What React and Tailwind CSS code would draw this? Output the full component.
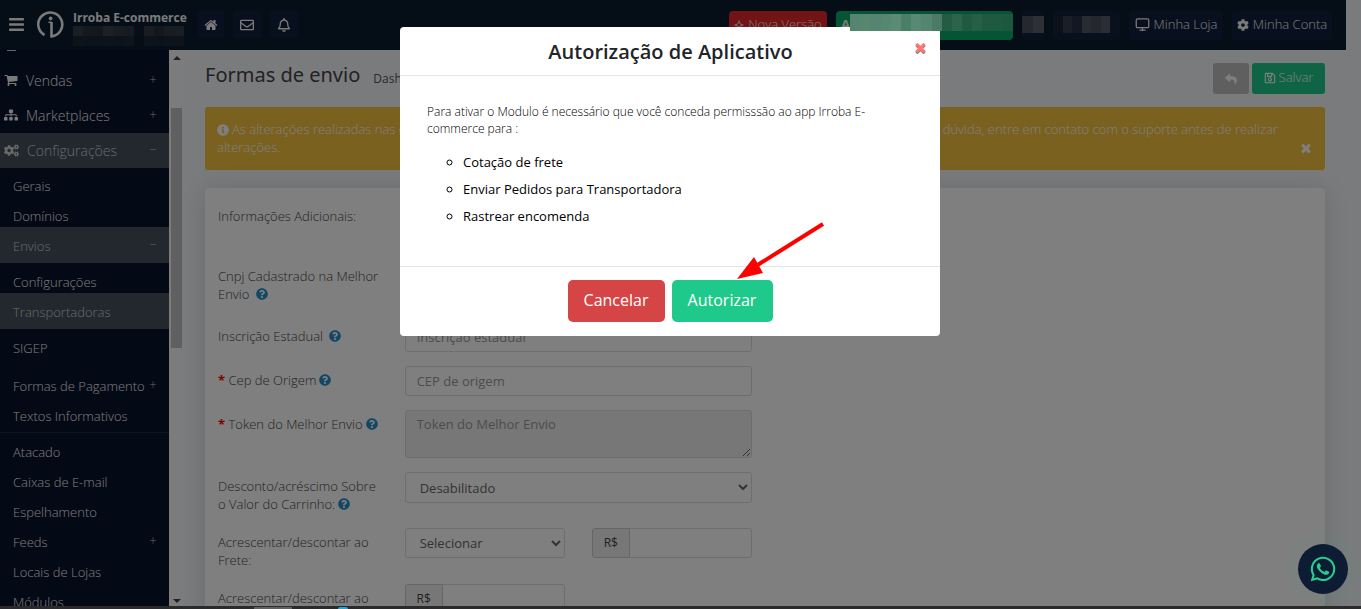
import {
  FaBars,
  FaCog,
  FaCogs,
  FaInfoCircle,
  FaQuestionCircle,
  FaRegBell,
  FaRegEnvelope,
  FaRegSave,
  FaReply,
  FaSitemap,
  FaWhatsapp,
} from "react-icons/fa";
import { Monitor } from "lucide-react";

const HOME =
  "M1472 992v480q0 26-19 45t-45 19h-384v-384h-256v384h-384q-26 0-45-19t-19-45v-480q0-1 .5-3t.5-3l575-474 575 474q1 2 1 6zm223-69l-62 74q-8 9-21 11h-3q-13 0-21-7l-692-577-692 577q-12 8-24 7-13-2-21-11l-62-74q-8-10-7-23.5t11-21.5l719-599q32-26 76-26t76 26l244 204v-195q0-14 9-23t23-9h192q14 0 23 9t9 23v408l219 182q10 8 11 21.5t-7 23.5z";
const CART =
  "M704 1536q0 52-38 90t-90 38-90-38-38-90 38-90 90-38 90 38 38 90zm896 0q0 52-38 90t-90 38-90-38-38-90 38-90 90-38 90 38 38 90zm128-1088v512q0 24-16.5 42.5t-40.5 21.5l-1044 122q13 60 13 70 0 16-24 64h920q26 0 45 19t19 45-19 45-45 19h-1024q-26 0-45-19t-19-45q0-11 8-31.5t16-36 21.5-40 15.5-29.5l-177-823h-204q-26 0-45-19t-19-45 19-45 45-19h256q16 0 28.5 6.5t19.5 15.5 13 24.5 8 26 5.5 29.5 4.5 26h1201q26 0 45 19t19 45z";
const TIMES =
  "M1490 1322q0 40-28 68l-136 136q-28 28-68 28t-68-28l-294-294-294 294q-28 28-68 28t-68-28l-136-136q-28-28-28-68t28-68l294-294-294-294q-28-28-28-68t28-68l136-136q28-28 68-28t68 28l294 294 294-294q28-28 68-28t68 28l136 136q28 28 28 68t-28 68l-294 294 294 294q28 28 28 68z";

function Glyph({ d, className }) {
  return (
    <svg viewBox="0 0 1792 1792" fill="currentColor" className={className} aria-hidden="true">
      <path d={d} />
    </svg>
  );
}

function Logo() {
  return (
    <svg viewBox="0 0 27 27" className="size-[27px] shrink-0" fill="none" stroke="currentColor" aria-hidden="true">
      <path d="M7.5 24A12 12 0 1 1 14.5 25.4V11" strokeWidth="2.6" />
      <circle cx="13.6" cy="7.4" r="1.9" fill="currentColor" stroke="none" />
      <path d="M11.5 11.3h3" strokeWidth="1.6" />
    </svg>
  );
}

function Sparkle() {
  return (
    <svg viewBox="0 0 12 12" className="size-[10px]" fill="none" stroke="currentColor" aria-hidden="true">
      <path d="M6 .8 7.3 4.7 11.2 6 7.3 7.3 6 11.2 4.7 7.3.8 6l3.9-1.3z" />
    </svg>
  );
}

function Mosaic({ colors, className }) {
  return (
    <div className={`flex ${className}`}>
      {colors.map((c, i) => (
        <span key={i} className="flex-1" style={{ background: c }} />
      ))}
    </div>
  );
}

function Header() {
  const square = "h-[27px] flex items-center justify-center rounded-xs bg-[#11213f]";
  const wide = "h-[29px] flex items-center justify-center gap-1 rounded-sm bg-[#11213f] pb-0.5 text-[13px] font-light whitespace-nowrap";
  return (
    <header className="mr-[15px] flex h-[50px] shrink-0 items-start bg-[#0b1a2f] pt-[11px] pr-[14px] pl-2 text-[#f4f4f4]">
      <button type="button" aria-label="Menu" className="mr-3 flex h-[27px] w-[17px] items-center">
        <FaBars size={17} />
      </button>
      <Logo />
      <div className="ml-[9px] w-[111px]">
        <div className="-mt-0.5 text-[12px] leading-[17px] font-bold whitespace-nowrap">Irroba E-commerce</div>
        <Mosaic
          className="h-[10px]"
          colors={["#343d4b", "#28323f", "#26303f", "#39424f", "#303a48", "#2c3645", "#0f1d30", "#303a48", "#27313f", "#303a48", "#323b49"]}
        />
        <Mosaic
          className="h-[10px]"
          colors={["#1b2637", "#172434", "#192535", "#1b2737", "#182435", "#1c2838", "#0c1b2f", "#1b2737", "#182435", "#1b2737", "#192636"]}
        />
      </div>
      <nav className="ml-[14px] flex gap-[9px]">
        <button type="button" aria-label="Início" className={`${square} w-[26px]`}>
          <Glyph d={HOME} className="size-[14px]" />
        </button>
        <button type="button" aria-label="Mensagens" className={`${square} w-[28px]`}>
          <FaRegEnvelope size={14} />
        </button>
        <button type="button" aria-label="Notificações" className={`${square} w-[28px]`}>
          <FaRegBell size={14} />
        </button>
      </nav>
      <nav className="ml-auto flex gap-[9px]">
        <button
          type="button"
          className="flex h-[29px] w-[98px] items-center justify-center gap-1 rounded-sm bg-[#e4282c] pb-0.5 text-[13px] font-light whitespace-nowrap"
        >
          <Sparkle />
          Nova Versão
        </button>
        <button type="button" className="h-[29px] w-[177px] rounded-sm bg-[#0aa866] pb-0.5 pl-[5px] text-left text-[13px] font-bold">
          A
        </button>
        <button type="button" aria-label="Idioma" className={`${wide} w-[22px]`}>
          <Mosaic className="h-[17px] w-full" colors={["#4a505f", "#5b606e"]} />
        </button>
        <button type="button" aria-label="Usuário" className={`${wide} w-[67px]`}>
          <Mosaic
            className="h-[17px] w-full"
            colors={["#192439", "#343c4c", "#262f42", "#505664", "#484e5c", "#545a67", "#142039"]}
          />
        </button>
        <button type="button" className={`${wide} w-[94px]`}>
          <Monitor size={15} strokeWidth={2} />
          Minha Loja
        </button>
        <button type="button" className={`${wide} w-[100px]`}>
          <FaCog size={12} />
          Minha Conta
        </button>
      </nav>
    </header>
  );
}

function MenuRow({ icon, label, sign, active }) {
  return (
    <a
      href="#"
      className={`flex h-[35px] items-center gap-2 pr-3 pb-px pl-1 text-[14px] font-light ${active ? "bg-[#47515d] text-[#d0d0d0]" : ""}`}
    >
      {icon}
      <span className="flex-1">{label}</span>
      <span className="w-2 text-center text-[13px] text-[#c0c0c0]">{sign}</span>
    </a>
  );
}

function SubRow({ label, sign, active }) {
  return (
    <a
      href="#"
      className={`flex justify-between pt-[10px] pr-3 pl-[13px] text-[13px] leading-[18px] font-light whitespace-nowrap ${
        active ? "bg-[#47515d] pb-2 text-[#d0d0d0]" : "pb-0.5"
      }`}
    >
      {label}
      {sign && <span className="w-2 text-center leading-[15px] text-[#c0c0c0]">{sign}</span>}
    </a>
  );
}

function Sidebar() {
  return (
    <aside className="flex shrink-0 overflow-hidden">
      <nav className="w-[169px] overflow-hidden bg-[#06122a] text-[#f4f4f4]">
        <div className="flex h-[13px] items-start pl-[7px]">
          <span className="h-px w-[9px] bg-[#c8c8c8]" />
        </div>
        <MenuRow icon={<Glyph d={CART} className="size-[14px]" />} label="Vendas" sign="+" />
        <MenuRow icon={<FaSitemap size={14} />} label="Marketplaces" sign="+" />
        <MenuRow icon={<FaCogs size={15} />} label="Configurações" sign="−" active />
        <div className="-mt-px">
          <SubRow label="Gerais" />
          <SubRow label="Domínios" />
          <SubRow label="Envios" sign="−" active />
          <SubRow label="Configurações" />
          <SubRow label="Transportadoras" active />
          <SubRow label="SIGEP" />
        </div>
        <div className="mt-2 pb-[5px]">
          <SubRow label="Formas de Pagamento" sign="+" />
          <SubRow label="Textos Informativos" />
        </div>
        <div className="border-t border-[#1f2b40]">
          <SubRow label="Atacado" />
          <SubRow label="Caixas de E-mail" />
          <SubRow label="Espelhamento" />
          <SubRow label="Feeds" sign="+" />
          <SubRow label="Locais de Lojas" />
          <SubRow label="Módulos" />
        </div>
      </nav>
      <div className="flex w-[15px] flex-col items-center bg-[#f8f8f8] py-1.5">
        <span className="border-x-4 border-b-4 border-x-transparent border-b-[#444]" />
        <span className="mt-12 h-60 w-[11px] bg-[#c1c1c1]" />
        <span className="mt-auto border-x-4 border-t-4 border-x-transparent border-t-[#444]" />
      </div>
    </aside>
  );
}

function Help() {
  return <FaQuestionCircle size={12} className="ml-[3px] inline align-[-1px] text-[#2490cc]" />;
}

function Field({ id, label, required, help, tall, children }) {
  return (
    <div className={`mb-[14px] flex ${tall || ""}`}>
      <label htmlFor={id} className="w-1/6 px-[13px] pt-[5px] text-[13px] leading-[18px] font-light">
        {required && <span className="font-bold text-[#f00]">* </span>}
        {label}
        {help && <Help />}
      </label>
      <div className="w-1/3 px-[13px]">{children}</div>
    </div>
  );
}

const control = "block w-full rounded-[3px] border border-[#dcdcdc] text-[13px] text-[#666] placeholder:text-[#999]";

function Money({ id }) {
  return (
    <div className="flex h-[30px]">
      <span className="flex w-[38px] items-center justify-center rounded-l-[3px] border border-[#ccc] bg-[#eee] text-[12px]">R$</span>
      <input id={id} aria-label="Valor em R$" className={`${control} min-w-0 flex-1 rounded-l-none border-l-0 px-3`} />
    </div>
  );
}

function Form() {
  return (
    <form className="flex-1 rounded-t-sm bg-white pt-[14px] text-[#444] shadow-[0_0_24px_rgba(0,0,0,0.12)]">
      <Field id="info" label="Informações Adicionais:" tall="min-h-[46px]" />
      <Field id="cnpj" label="Cnpj Cadastrado na Melhor Envio " help tall="min-h-[46px]">
        <input id="cnpj" className={`${control} h-[30px] bg-white px-[11px]`} />
      </Field>
      <Field id="ie" label="Inscrição Estadual " help>
        <input id="ie" placeholder="Inscrição estadual" className={`${control} h-[30px] bg-white px-[11px]`} />
      </Field>
      <Field id="cep" label="Cep de Origem" required help>
        <input id="cep" placeholder="CEP de origem" className={`${control} h-[30px] bg-white px-[11px]`} />
      </Field>
      <Field id="token" label="Token do Melhor Envio" required help>
        <textarea id="token" placeholder="Token do Melhor Envio" className={`${control} h-12 bg-[#eee] px-[11px] py-1`} />
      </Field>
      <Field id="desconto" label="Desconto/acréscimo Sobre o Valor do Carrinho:" help tall="min-h-[42px]">
        <select id="desconto" className={`${control} h-[31px] bg-white px-[10px]`}>
          <option>Desabilitado</option>
        </select>
      </Field>
      <Field id="frete" label="Acrescentar/descontar ao Frete:" tall="min-h-[42px]">
        <div className="grid grid-cols-2 gap-[27px]">
          <select id="frete" className={`${control} h-[30px] bg-white px-[10px]`}>
            <option>Selecionar</option>
          </select>
          <Money id="frete-valor" />
        </div>
      </Field>
      <Field id="frete2" label="Acrescentar/descontar ao">
        <div className="grid grid-cols-2 gap-[27px]">
          <Money id="frete2" />
        </div>
      </Field>
    </form>
  );
}

function Main() {
  return (
    <main className="flex min-w-0 flex-1 flex-col overflow-hidden bg-[#f4f6fa] pt-[13px] pr-9 pl-[21px]">
      <div className="flex h-[31px] shrink-0 items-center">
        <h1 className="mb-2 font-['Noto_Sans',sans-serif] text-[20px] leading-6 text-[#444]">Formas de envio</h1>
        <a href="#" className="ml-[13px] text-[12px] text-[#555]">
          Dashboard
        </a>
        <div className="ml-auto flex gap-[3px] text-white">
          <button type="button" aria-label="Voltar" className="flex h-[31px] w-9 items-center justify-center rounded-[3px] bg-[#bfbfbf]">
            <FaReply size={12} />
          </button>
          <button
            type="button"
            className="flex h-[31px] w-[73px] items-center justify-center gap-[3px] rounded-[3px] bg-[#1ec98b] pb-0.5 text-[13px] font-light"
          >
            <FaRegSave size={12} />
            Salvar
          </button>
        </div>
      </div>
      <div
        role="alert"
        className="mt-[13px] mb-[18px] flex h-[63px] shrink-0 rounded-[3px] bg-[#f5c23e] px-3 pt-[13px] text-[13px] leading-[18px] font-light text-white"
      >
        <p className="flex-1">
          <FaInfoCircle size={12} className="mr-[3px] inline align-[-2px]" />
          As alterações realizadas nas configurações desta página afetam diretamente o seu cálculo de fretes das lojas. Em caso de dúvida, entre em contato com o suporte antes de realizar alterações.
        </p>
        <button type="button" aria-label="Fechar aviso" className="mt-[21px] flex size-[14px] items-center justify-center">
          <Glyph d={TIMES} className="size-[14px]" />
        </button>
      </div>
      <Form />
    </main>
  );
}

function AuthorizeModal() {
  return (
    <div className="fixed inset-0 z-10 flex items-start justify-center overflow-hidden bg-black/50 pt-[27px] pr-[21px]">
      <section role="dialog" aria-labelledby="modal-title" className="relative w-[540px] rounded-[4px] bg-white">
        <header className="flex h-[49px] items-center border-b border-[#e5e5e5] pr-3 pl-7">
          <h2 id="modal-title" className="flex-1 pt-0.5 text-center text-[20px] font-semibold text-[#212529]">
            Autorização de Aplicativo
          </h2>
          <button type="button" aria-label="Fechar" className="mb-2 text-[#f77] drop-shadow-[0_1px_0_#777]">
            <Glyph d={TIMES} className="size-[15px]" />
          </button>
        </header>
        <div className="px-[27px] pt-[27px] pb-9">
          <p className="text-[12px] leading-[17px] font-light text-black">
            Para ativar o Modulo é necessário que você conceda permisssão ao app Irroba E-commerce para :
          </p>
          <ul className="mt-3 list-[circle] pl-9 text-[13px] leading-[27px] text-black">
            <li>Cotação de frete</li>
            <li>Enviar Pedidos para Transportadora</li>
            <li>Rastrear encomenda</li>
          </ul>
        </div>
        <footer className="flex justify-center gap-[7px] border-t border-[#e5e5e5] pt-[13px] pb-[14px] text-[16px] text-white">
          <button type="button" className="h-[42px] w-[97px] rounded-[5px] bg-[#d64545] pb-0.5">
            Cancelar
          </button>
          <button type="button" className="h-[42px] w-[101px] rounded-[5px] bg-[#1ec98b] pb-0.5">
            Autorizar
          </button>
        </footer>
        <svg viewBox="0 0 90 60" className="absolute top-[194px] left-[336px] h-[60px] w-[90px]" aria-hidden="true">
          <path d="M87 3 20 45" stroke="#f00" strokeWidth="4" />
          <path d="M1 58 18 36 27 52z" fill="#f00" />
        </svg>
      </section>
    </div>
  );
}

export default function App() {
  return (
    <div className="flex h-screen flex-col overflow-hidden bg-[#f4f6fa] font-['Open_Sans',sans-serif]">
      <Header />
      <div className="flex min-h-0 flex-1">
        <Sidebar />
        <Main />
      </div>
      <AuthorizeModal />
      <Mosaic
        className="fixed top-[14px] right-[348px] z-20 h-[17px] w-[163px]"
        colors={["#538570", "#57876f", "#538570", "#56886f", "#5a8b74", "#4a7f67", "#578a74", "#538570", "#4b7b66", "#235c43", "#2a6449", "#1f5a40", "#256046", "#1f5a40", "#1e5a3f", "#1c583d"]}
      />
      <a
        href="#"
        aria-label="WhatsApp"
        className="fixed right-[13px] bottom-[15px] z-20 flex size-[50px] items-center justify-center rounded-full bg-[#0d1c33] text-[#24cf8f] shadow-[0_0_0_14px_rgba(30,201,139,0.03)]"
      >
        <FaWhatsapp size={28} />
      </a>
      <div className="fixed inset-x-0 bottom-0 z-20 flex h-[3px] bg-[#2b2b2b]">
        <span className="ml-[254px] h-0.5 w-[38px] self-end bg-[#606060]" />
        <span className="ml-[46px] h-0.5 w-[10px] self-end rounded-t-full bg-[#1da8dc]" />
      </div>
    </div>
  );
}
